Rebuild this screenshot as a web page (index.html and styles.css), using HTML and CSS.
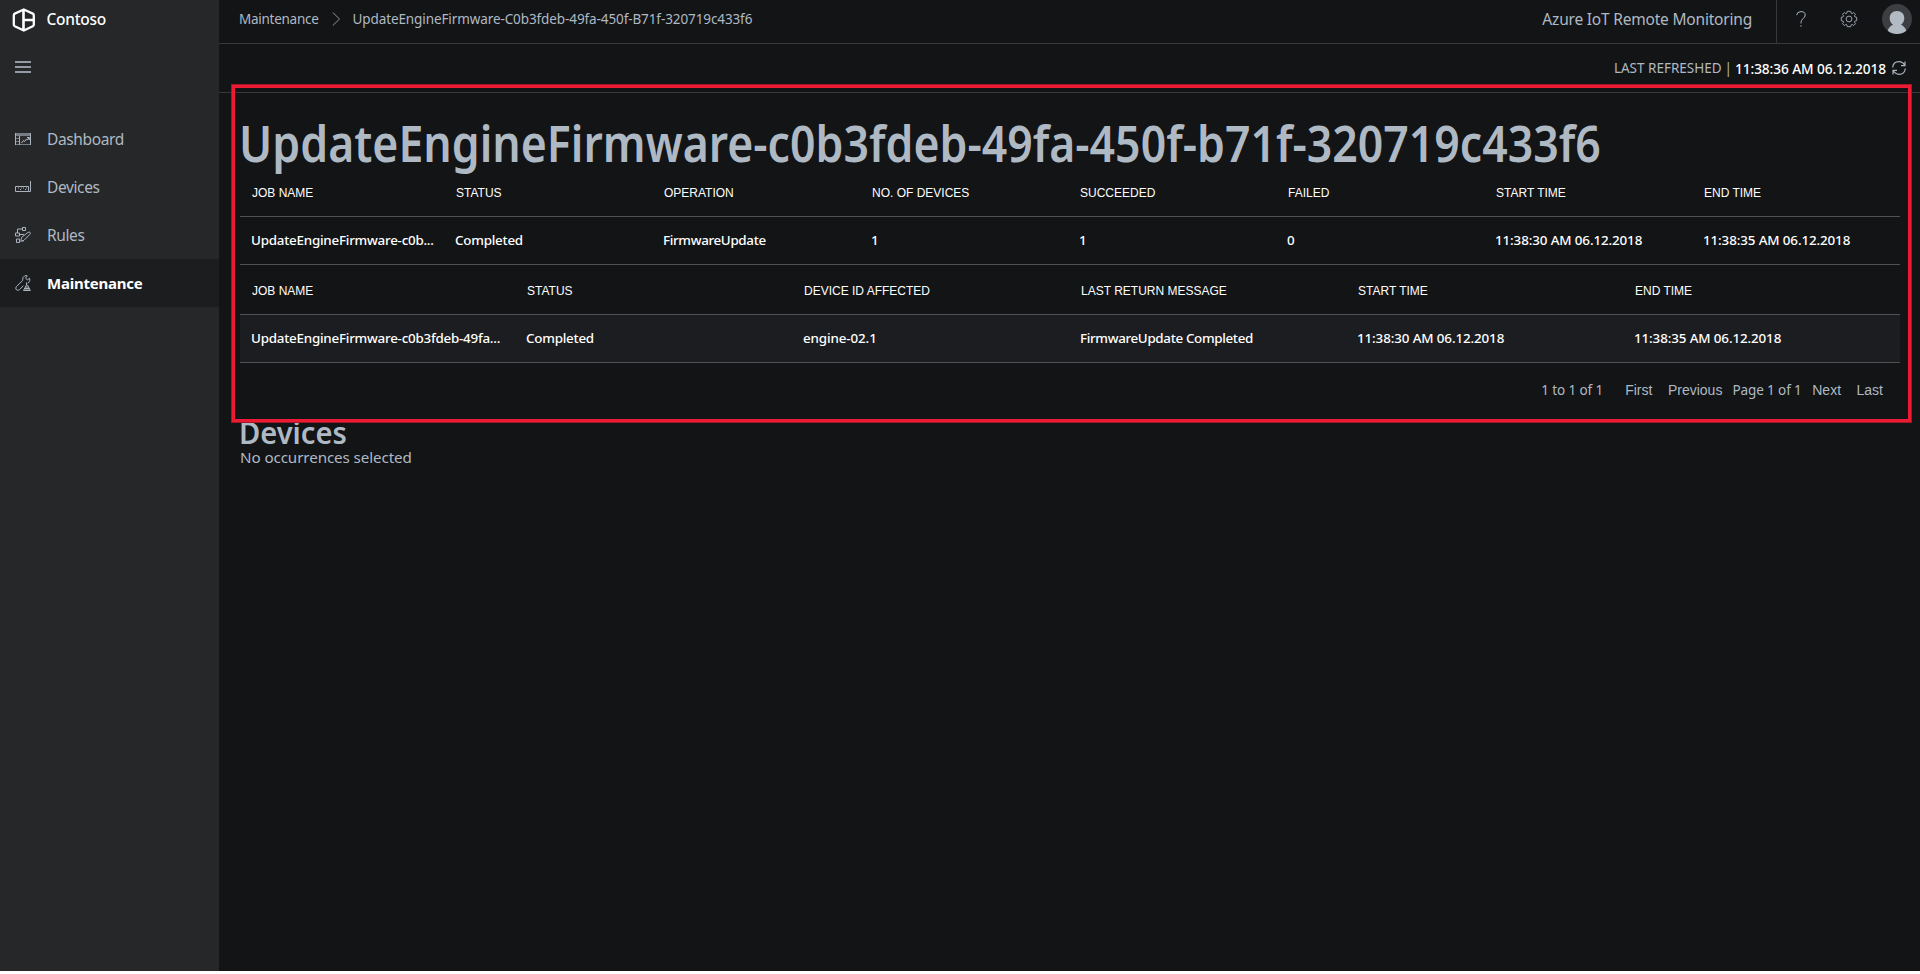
FILE: index.html
```
<!DOCTYPE html>
<html lang="en">
<head>
<meta charset="utf-8">
<title>Azure IoT Remote Monitoring</title>
<link rel="stylesheet" href="styles.css">
</head>
<body>
<div class="app">
  <aside class="sidebar">
    <div class="brand">
      <svg class="brand-logo" width="24" height="24" viewBox="0 0 24 24" fill="none" stroke="#fff" stroke-width="2.3" stroke-linejoin="round"><path d="M11.8 1.5 20.8 5.6Q21.8 6.1 21.8 7.4V16.4Q21.8 17.6 20.8 18.2L11.8 22.5 2.8 18.2Q1.8 17.6 1.8 16.4V7.4Q1.8 6.1 2.8 5.6Z"/><path d="M11.5 2V22M12 12H22" stroke-width="2.6"/></svg>
      <span>Contoso</span>
    </div>
    <div class="menu-toggle">
      <svg width="16" height="12" viewBox="0 0 16 12" fill="#959ba5" shape-rendering="crispEdges"><path d="M0 0h16v2H0zM0 5h16v2H0zM0 10h16v2H0z"/></svg>
    </div>
    <nav class="nav">
      <a class="nav-item">
        <svg width="16" height="16" viewBox="0 0 16 16" fill="none"><path d="M0 2h16v12H0z" fill="#767d85"/><path d="M1 5h3v2H1zM1 8h3v2H1zM1 11h3v2H1zM5 5h10v8H5z" fill="#2a2c2f"/><path d="M.5 2v12M4.5 4.500v9.500M15.500 2v12" stroke="#aab2bb"/><path d="M6.500 12l2-2.500 1 1 2-2.500 1 1 1.500-2.500M12 6.500h2.300V9" stroke="#b9c0c8"/></svg>
        <span>Dashboard</span>
      </a>
      <a class="nav-item">
        <svg width="16" height="16" viewBox="0 0 16 16" fill="none" stroke="#aab3bd"><path d="M.5 7.500h13v5H.5zM13.500 12.500h2V2"/><path d="M3 9h1M5 10.500h1M8 9h1M10 10.500h1M6 9h.8M11 9h1"/></svg>
        <span>Devices</span>
      </a>
      <a class="nav-item">
        <svg width="16" height="16" viewBox="0 0 16 16" fill="none" stroke="#aab3bd"><path d="M7.500.5h3v3h-3zM.5 6h4v3h-4zM1.500 12h3v3.500h-3z"/><path d="M7.500 2H2.500v4M4.500 7.500H9M4.500 14H8.500V13"/><path d="M6.500 10.500 12.800 5.500q1.600-1 2.400 0 .5 1-.5 2L9 13.300l-1.800.5-1-1z"/></svg>
        <span>Rules</span>
      </a>
      <a class="nav-item nav-item--active">
        <svg width="16" height="16" viewBox="0 0 16 16" fill="none" stroke="#aab3bd"><path d="M8.300 10.700 4.500 14.700q-1.700 1.300-3.200 0-1.300-1.600.2-3.200L7.700 5.400Q7.200 2 9.600.9q1.500-.6 2.700 0L10.500 3l1.800 2 2.200-1.800q1 2.300-.6 4.200l-1.400.9"/><path d="M11.500 7.500v2.500L8.500 15.500h6.800L12.500 10M9 13.500h5.500M11 11v4M13 11.500v3.500"/></svg>
        <span>Maintenance</span>
      </a>
    </nav>
  </aside>

  <main class="main">
    <header class="topbar">
      <div class="breadcrumbs">
        <span class="crumb-root">Maintenance</span>
        <svg width="9" height="14" viewBox="0 0 9 14" fill="none" stroke="#8d959e"><path d="M.8.5 7.500 7 .8 13.500"/></svg>
        <span class="crumb-page">UpdateEngineFirmware-C0b3fdeb-49fa-450f-B71f-320719c433f6</span>
      </div>
      <div class="product">Azure IoT Remote Monitoring</div>
      <div class="actions">
        <svg class="help" width="10" height="16" viewBox="0 0 10 16" fill="none" stroke="#aab3bd"><path d="M.7 4.200Q.9.600 5 .6 9.200.6 9.200 4q0 2-2.300 3.800Q5 9.300 5 11.500V12.500M5 14.200v1.500"/></svg>
        <svg class="gear" width="18" height="18" viewBox="-9 -9 18 18" fill="none" stroke="#9aa3ad"><path d="M-1.700-7.700H1.700L2.200-5.800 3.200-5.400 4.700-6.500 6.500-4.700 5.400-3.200 5.800-2.200 7.700-1.700V1.700L5.800 2.200 5.400 3.200 6.500 4.700 4.700 6.500 3.200 5.400 2.200 5.800 1.700 7.700H-1.700L-2.200 5.800-3.200 5.400-4.700 6.500-6.500 4.700-5.400 3.200-5.800 2.200-7.700 1.700V-1.700L-5.800-2.200-5.400-3.200-6.500-4.700-4.700-6.500-3.200-5.400-2.200-5.800Z"/><circle r="2.900"/></svg>
        <svg class="avatar" width="30" height="30" viewBox="0 0 30 30"><circle cx="15" cy="15" r="15" fill="#3c3e42"/><path d="M15 7C10.500 7 7.700 10 7.700 14.200 7.700 17 9 19.200 11 20.700 8.300 22 6.500 23.800 5.700 26.700A15 15 0 0 0 24.300 26.700C23.500 23.800 21.700 22 19 20.700 21 19.200 22.300 17 22.300 14.200 22.300 10 19.500 7 15 7Z" fill="#b2bbc4"/></svg>
      </div>
    </header>

    <div class="refresh-bar">
      <span class="refresh-label">LAST REFRESHED</span><span class="refresh-sep">|</span><span class="refresh-time">11:38:36 AM 06.12.2018</span>
      <svg width="14" height="14" viewBox="0 0 14 14" fill="none" stroke="#aab3bd" stroke-width="1.2"><path d="M.7 6.500Q1.200.7 7 .7q3.700 0 5.800 3.800M13 .5v4.200H9M13.300 7.500Q12.800 13.300 7 13.300q-3.700 0-5.800-3.800M1 13.500V9.300H5"/></svg>
    </div>

    <section class="content">
      <h1 class="title"><span>UpdateEngineFirmware-c0b3fdeb-49fa-450f-b71f-320719c433f6</span></h1>

      <div class="grid grid--jobs">
        <div class="row row--head"><span>JOB NAME</span><span>STATUS</span><span>OPERATION</span><span>NO. OF DEVICES</span><span>SUCCEEDED</span><span>FAILED</span><span>START TIME</span><span>END TIME</span></div>
        <div class="row"><span class="name">UpdateEngineFirmware-c0b...</span><span class="name">Completed</span><span class="word">FirmwareUpdate</span><span>1</span><span>1</span><span>0</span><span>11:38:30 AM 06.12.2018</span><span>11:38:35 AM 06.12.2018</span></div>
      </div>

      <div class="grid grid--devices">
        <div class="row row--head"><span>JOB NAME</span><span>STATUS</span><span>DEVICE ID AFFECTED</span><span>LAST RETURN MESSAGE</span><span>START TIME</span><span>END TIME</span></div>
        <div class="row row--shaded"><span class="name">UpdateEngineFirmware-c0b3fdeb-49fa...</span><span class="name">Completed</span><span>engine-02.1</span><span class="word">FirmwareUpdate Completed</span><span>11:38:30 AM 06.12.2018</span><span>11:38:35 AM 06.12.2018</span></div>
      </div>

      <div class="pager">
        <span class="pager-range">1 to 1 of 1</span>
        <button>First</button>
        <button>Previous</button>
        <span class="pager-page">Page 1 of 1</span>
        <button>Next</button>
        <button>Last</button>
      </div>

      <h2 class="subtitle"><span>Devices</span></h2>
      <p class="empty">No occurrences selected</p>
      <div class="highlight"></div>
    </section>
  </main>
</div>
</body>
</html>
```
FILE: styles.css
```
* { box-sizing: border-box; }

body {
  margin: 0;
  background: #fff;
  color: #afb9c3;
  font-family: "Noto Sans", "Open Sans", sans-serif;
  overflow: hidden;
}

.app {
  display: flex;
  height: 971px;
  background: #131416;
}

.sidebar {
  width: 219px;
  flex: none;
  background: #252729;
}

.brand {
  display: flex;
  align-items: center;
  gap: 11px;
  height: 40px;
  padding-left: 11.500px;
  color: #fff;
  font-size: 15.500px;
  font-weight: 500;
}

.brand span {
  padding-bottom: 2px;
  letter-spacing: -0.300px;
}

.menu-toggle {
  height: 75px;
  padding: 21px 0 0 15px;
}

.menu-toggle svg { display: block; }

.nav-item {
  display: flex;
  align-items: center;
  gap: 16px;
  height: 48px;
  padding-left: 15px;
  font-size: 15.500px;
  letter-spacing: -0.380px;
}

.nav-item span { padding-bottom: 1px; }

.nav-item--active {
  background: #1c1d1f;
  color: #fff;
  font-size: 15px;
  font-weight: 700;
  letter-spacing: -0.240px;
}

.main {
  flex: 1;
  min-width: 0;
}

.topbar {
  display: flex;
  align-items: center;
  height: 44px;
  border-bottom: 1px solid #36383b;
}

.breadcrumbs {
  display: flex;
  align-items: center;
  flex: 1;
  padding: 0 0 5px 20px;
  font-size: 13.500px;
  letter-spacing: -0.270px;
}

.breadcrumbs svg { margin: 0 12px 0 13px; }

.crumb-page { letter-spacing: -0.100px; }

.product {
  padding: 0 24px 6px 0;
  font-size: 15.500px;
  letter-spacing: -0.200px;
}

.actions {
  display: flex;
  align-items: center;
  width: 144px;
  height: 100%;
  padding: 0 8px 5px 19px;
  border-left: 1px solid #36383b;
}

.gear { margin-left: 34px; }
.avatar { margin-left: auto; }

.refresh-bar {
  display: flex;
  align-items: center;
  justify-content: flex-end;
  height: 49px;
  padding: 0 14px 0 0;
  border-bottom: 1px solid #36383b;
  font-size: 13.500px;
}

.refresh-sep { margin: 0 3px 0 3px; }

.refresh-time {
  margin-right: 6px;
  color: #fff;
  font-size: 13.700px;
  font-weight: 500;
  letter-spacing: -0.100px;
}

.content {
  position: relative;
  padding: 24px 20px 0 21px;
}

.title {
  height: 53px;
  margin: 0 0 0 -1.500px;
  font-size: 50px;
  line-height: 52px;
  font-weight: 600;
  white-space: nowrap;
}

.title span {
  display: inline-block;
  transform: scaleX(0.892);
  transform-origin: left;
}

.row {
  display: grid;
  align-items: center;
  height: 48px;
  border-bottom: 1px solid #505154;
  color: #fff;
  font-size: 13.400px;
  font-weight: 500;
  letter-spacing: -0.120px;
  white-space: nowrap;
}

.grid--jobs .row { grid-template-columns: 204px repeat(7, 208px); }
.grid--devices .row { grid-template-columns: 275px repeat(5, 277px); }

.row span { padding: 0 0 2px 11px; }

.row--head {
  height: 50px;
  font: 400 12px "Liberation Sans", Arial, sans-serif;
  letter-spacing: 0;
}

.grid--jobs .row--head { height: 47px; }
.row--head span { padding: 0 0 0 12px; }
.grid--devices .row--head span { padding-top: 2px; }
.row--shaded { background: #1c1d20; }
.row .name { letter-spacing: -0.240px; }
.row .word { letter-spacing: -0.340px; }

.pager {
  display: flex;
  align-items: center;
  justify-content: flex-end;
  height: 54px;
  padding-right: 17px;
  font-size: 13.500px;
  letter-spacing: -0.100px;
}

.pager button {
  padding: 0;
  border: 0;
  background: none;
  color: inherit;
  font: 14px "Liberation Sans", Arial, sans-serif;
}

.pager-range { margin-right: 22px; }
.pager button + button { margin-left: 15.500px; }
.pager-page { margin: 0 10.500px 0 10px; }

.subtitle {
  height: 30px;
  margin: 0 0 0 -1.500px;
  font-size: 31px;
  line-height: 30px;
  font-weight: 600;
}

.subtitle span {
  display: inline-block;
  transform: scaleX(0.938);
  transform-origin: left;
}

.empty {
  margin: 0;
  font-size: 15.200px;
  line-height: 20px;
  letter-spacing: -0.100px;
}

/* callout frame drawn over the job details */
.highlight {
  position: absolute;
  top: -9px;
  left: 12px;
  width: 1681px;
  height: 339px;
  border: 4px solid #ed1a33;
  outline: 1px solid #a01828;
  outline-offset: -1px;
}
```
